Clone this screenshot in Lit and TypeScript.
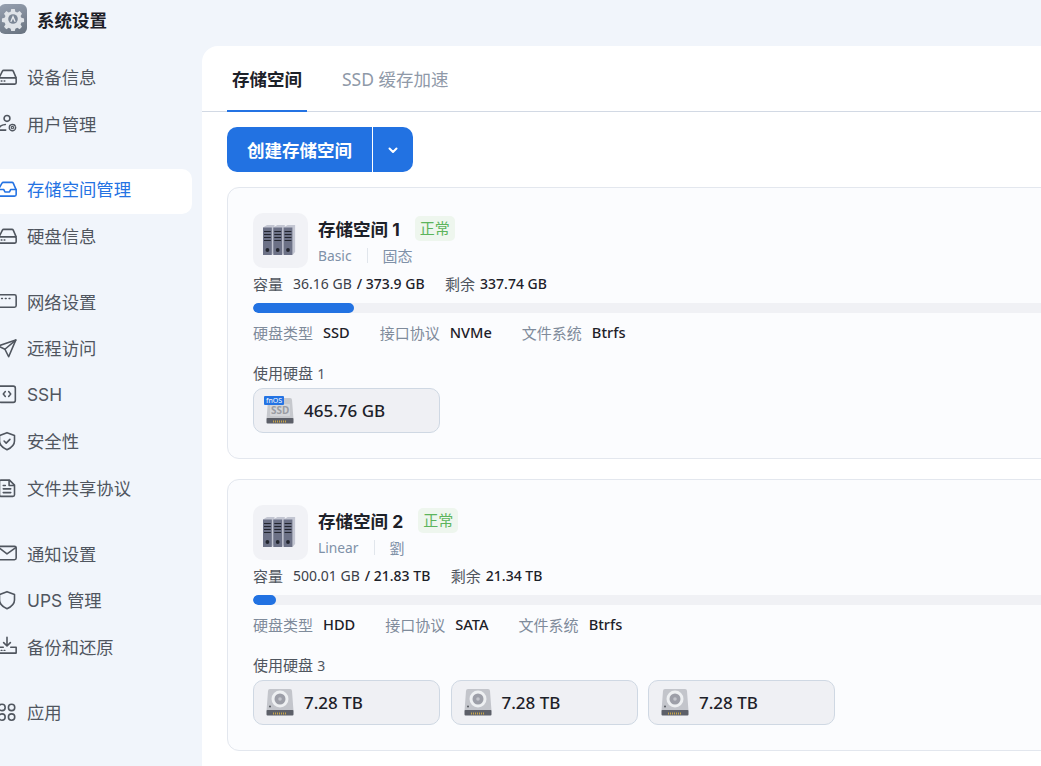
import { LitElement, html, css, svg } from "lit";
import { customElement } from "lit/decorators.js";

const driveIcon = svg`<path d="M2.5 13 6.5 5Q7 4 8 4H18Q19 4 19.5 5L23 13"/><rect x="1.5" y="13" width="21.5" height="7.5" rx="1.5"/><path d="M5 16.8h1M8.5 16.8h1" stroke-width="1.6"/>`;
const icons: Record<string, unknown> = {
  drive: driveIcon,
  user: svg`<circle cx="12" cy="6.5" r="3.5"/><path d="M2.5 20.5v-1.5Q3 14.5 10 13.8"/><path d="M2.5 20.5h8"/><circle cx="18.5" cy="17.5" r="1.4" stroke-width="1.4"/><circle cx="18.5" cy="17.5" r="3.8" stroke-dasharray="2 1.2" stroke-width="1.8"/>`,
  inbox: svg`<path d="M1.5 13 6 5Q6.5 4 7.5 4H18Q19 4 19.5 5L23 13V18.5Q23 20.5 21 20.5H3.5Q1.5 20.5 1.5 18.5Z"/><path d="M1.5 12.5H8L9.5 15.5H15L16.5 12.5H23"/>`,
  net: svg`<rect x="1.5" y="4.5" width="21.5" height="15" rx="2"/><path d="M5.5 9h1M10 9h1M14.5 9h1" stroke-width="1.8"/>`,
  send: svg`<path d="M22.5 2.5 1.5 9.5 9.5 13.5 14 22.5Z"/><path d="M22.5 2.5 9.5 13.5"/>`,
  ssh: svg`<rect x="2" y="2.5" width="20" height="19.5" rx="2.5"/><path d="M10 9 7.5 12 10 15M14 9 16.5 12 14 15" stroke-width="1.8"/>`,
  shield: svg`<path d="M12 2 21 5.5V12Q21 18.5 12 22.5 3 18.5 3 12V5.5Z"/><path d="M8.5 12 11 14.5 15.5 10"/>`,
  file: svg`<path d="M4.5 2.5H15L21 8.5V20Q21 22 19 22H5Q3 22 3 20V4Q3 2.5 4.5 2.5Z"/><path d="M14.5 3V9H20.5M7.5 13H16.5M7.5 17.5H16.5M7.5 9H10"/>`,
  mail: svg`<rect x="1.5" y="4" width="21.5" height="16" rx="2"/><path d="M2 5.5 12 13 22.5 5.5"/>`,
  ups: svg`<path d="M12 2 21 5.5V12Q21 18.5 12 22.5 3 18.5 3 12V5.5Z"/>`,
  backup: svg`<path d="M12 1.5V11.5M8 8 12 12 16 8M7.5 13.5H2V20.5H23V13.5H16.5"/><path d="M5 17.3h1M8.5 17.3h1" stroke-width="1.6"/>`,
  apps: svg`<circle cx="6" cy="6.5" r="3.8"/><circle cx="17.5" cy="6.5" r="3.8"/><circle cx="6" cy="18" r="3.8"/><circle cx="17.5" cy="18" r="3.8"/>`,
};

const groups = [
  [["drive", "设备信息"], ["user", "用户管理"]],
  [["inbox", "存储空间管理", true], ["drive", "硬盘信息"]],
  [["net", "网络设置"], ["send", "远程访问"], ["ssh", "SSH"], ["shield", "安全性"], ["file", "文件共享协议"]],
  [["mail", "通知设置"], ["ups", "UPS 管理"], ["backup", "备份和还原"]],
  [["apps", "应用"]],
] as [string, string, boolean?][][];

const serverIcon = html`<svg width="36" height="34" viewBox="0 0 36 34">
  ${[0, 10.3, 20.6].map(
    (x) => svg`
    <path d="M${x} 3.5 L${4 + x} 1 H${11.5 + x} V28 L${9 + x} 31 Z" fill="#c3c6d2"/>
    <rect x="${x}" y="3.5" width="8.8" height="27.5" fill="#6c7186"/>
    <path d="M${1 + x} 7.5h6.8M${1 + x} 10.5h6.8M${1 + x} 13.5h6.8M${1 + x} 16.5h6.8" stroke="#23262f" stroke-width="1.2"/>
    <circle cx="${4.4 + x}" cy="26" r="1.9" fill="#23262f"/>`
  )}
</svg>`;

const band = svg`<rect x="0.5" y="22" width="27" height="5.5" rx="1" fill="#5c5f68"/>
  <path d="M7 25.5h14" stroke="#c8a64a" stroke-width="2" stroke-dasharray="1 1"/>`;

const ssdIcon = html`<span class="disk-ico"><svg width="28" height="30" viewBox="0 0 28 30">
  <path d="M2 4 Q2 2 4 2 H24 Q26 2 26 4 L27.5 23 H0.5 Z" fill="#c6c8cd"/>
  <rect x="4" y="8" width="20" height="12" rx="1" fill="#d4d6da"/>
  ${band}
</svg><span class="ssd-txt">SSD</span><span class="fnos">fnOS</span></span>`;

const hddIcon = html`<svg class="disk-svg" width="28" height="30" viewBox="0 0 28 30">
  <path d="M2 3 Q2 1 4 1 H24 Q26 1 26 3 L27.5 23 H0.5 Z" fill="#c3c5cb"/>
  <circle cx="14" cy="11" r="8.5" fill="#eef0f2"/>
  <circle cx="14" cy="11" r="5.5" fill="#9d9fa8"/>
  <circle cx="14" cy="11" r="1.8" fill="#c3c5cb"/>
  <circle cx="4" cy="18.5" r="1" fill="#55585f"/>
  ${band}
</svg>`;

interface Vol {
  name: string; kind: string; media: string; used: string; total: string; free: string;
  fill: number; type: string; bus: string; count: number; disks: string[]; ssd: boolean;
}
const vols: Vol[] = [
  { name: "存储空间 1", kind: "Basic", media: "固态", used: "36.16 GB", total: "/ 373.9 GB", free: "337.74 GB", fill: 101, type: "SSD", bus: "NVMe", count: 1, disks: ["465.76 GB"], ssd: true },
  { name: "存储空间 2", kind: "Linear", media: "劉", used: "500.01 GB", total: "/ 21.83 TB", free: "21.34 TB", fill: 23, type: "HDD", bus: "SATA", count: 3, disks: ["7.28 TB", "7.28 TB", "7.28 TB"], ssd: false },
];

@customElement("app-root")
export class AppRoot extends LitElement {
  static styles = css`
    :host {
      display: flex; width: 1041px; height: 766px; overflow: hidden;
      background: #f1f5fb; color: #1d2129;
      font-family: Inter, "Noto Sans CJK SC", sans-serif;
    }
    .side { flex: none; width: 202px; box-sizing: border-box; }
    .brand { display: flex; align-items: center; gap: 10px; height: 38px; margin-left: -1px; font-size: 17.5px; font-weight: 700; }
    .logo { width: 28px; height: 30px; border-radius: 6px; background: linear-gradient(160deg, #97a1b1, #68727f); display: flex; align-items: center; justify-content: center; }
    .groups { margin-top: 18.85px; display: flex; flex-direction: column; gap: 20.55px; }
    .group { display: flex; flex-direction: column; gap: 1.6px; }
    .item { display: flex; align-items: center; gap: 10px; height: 45px; width: 202px; box-sizing: border-box; margin-left: -10px; padding: 0 0 5px 7px; border-radius: 10px; font-size: 17.33px; color: #50565f; }
    .item svg { width: 20px; height: 20px; fill: none; stroke: currentColor; stroke-width: 1.9; stroke-linecap: round; stroke-linejoin: round; flex: none; }
    .item.on { background: #fff; color: #2473e3; }
    .main { flex: none; width: 1000px; margin-top: 46px; background: #fff; border-top-left-radius: 16px; padding: 0 25px; box-sizing: border-box; }
    .tabs { display: flex; gap: 30px; height: 65px; margin: 0 -25px; padding: 0 25px; border-bottom: 1px solid #d2d9e4; }
    .tab { padding: 0 5px; line-height: 67px; font-size: 17.5px; color: #8f99a8; height: 65px; box-sizing: border-box; font-family: "Noto Sans", "Noto Sans CJK SC", sans-serif; }
    .tab.on { color: #1d2129; font-weight: 700; height: 66px; border-bottom: 2px solid #2473e3; }
    .btns { display: flex; width: 186px; height: 45px; margin-top: 15px; border-radius: 10px; overflow: hidden; background: #2272e2; color: #fff; font-size: 17.5px; font-weight: 700; }
    .btn-main { width: 145px; display: flex; align-items: center; justify-content: center; border-right: 1px solid #fff; }
    .btn-drop { flex: 1; display: flex; align-items: center; justify-content: center; }
    .card { margin-top: 15px; padding: 25px; height: 272px; box-sizing: border-box; border: 1px solid #e3e7ee; border-radius: 12px; background: #fbfcfe; width: 950px; }
    .card + .card { margin-top: 20px; }
    .head { display: flex; gap: 10px; height: 55px; }
    .srv { width: 55px; height: 55px; border-radius: 10px; background: #f1f2f6; display: flex; align-items: center; justify-content: center; }
    .tt { display: flex; align-items: center; gap: 15px; height: 25px; margin-top: 3px; font-size: 17.5px; font-weight: 700; }
    .badge { font-size: 15px; font-weight: 400; color: #5cb45c; background: #eef6ee; border-radius: 5px; padding: 0 5px; height: 25px; line-height: 25px; }
    .sub { display: flex; align-items: center; gap: 15px; margin-top: 3px; height: 22px; font-size: 15px; color: #7f91a8; }
    .sub em { font-style: normal; font-size: 13.8px; font-family: "Noto Sans", sans-serif; }
    .sub i { width: 1px; height: 15px; background: #e1e6ec; }
    .metrics { display: flex; align-items: center; height: 22px; margin-top: 4px; font-size: 15px; color: #50565f; }
    .metrics span, .metrics b { font-family: "Noto Sans", sans-serif; font-size: 14px; color: #3c4149; }
    .metrics b { font-weight: 500; color: #1d2129; }
    .metrics .u { margin-left: 10px; }
    .metrics .t { margin-left: 5px; }
    .metrics .r { margin-left: 20.5px; font-family: inherit; font-size: 15px; color: #50565f; }
    .metrics .f { margin-left: 5px; }
    .bar { height: 10px; margin-top: 9px; border-radius: 5px; background: #f0f1f5; overflow: hidden; }
    .bar div { height: 100%; border-radius: 5px; background: #2272e2; }
    .details { display: flex; align-items: center; gap: 30px; height: 22px; margin-top: 8px; font-size: 15px; color: #7f8b9b; }
    .details span { display: flex; align-items: center; gap: 10px; }
    .details b { font-family: "Noto Sans", sans-serif; font-size: 14.6px; font-weight: 500; color: #1d2129; }
    .lbl { height: 22px; line-height: 22px; margin-top: 20px; font-size: 15px; color: #50565f; }
    .lbl em { font-style: normal; font-size: 14px; font-family: "Noto Sans", sans-serif; }
    .disks { display: flex; gap: 10.5px; margin-top: 3px; }
    .disk { display: flex; align-items: center; gap: 10px; width: 187px; height: 45px; box-sizing: border-box; padding: 0 0 0 12px; border: 1px solid #cfd8e3; border-radius: 10px; background: #eff0f4; font-family: "Noto Sans", sans-serif; font-size: 17px; font-weight: 500; color: #1d2129; }
    .disk-ico { position: relative; width: 28px; height: 30px; flex: none; }
    .disk-svg { flex: none; }
    .fnos { position: absolute; left: -2px; top: 0; background: #2473e3; color: #fff; font-size: 7px; line-height: 9px; height: 9px; padding: 0 2px; border-radius: 1px; font-weight: 400; }
    .ssd-txt { position: absolute; left: 5px; top: 9px; font-size: 10px; font-weight: 700; line-height: 11px; color: #9a9ca3; }
  `;

  render() {
    return html`
      <aside class="side">
        <div class="brand">
          <span class="logo"><svg width="24" height="24" viewBox="0 0 24 24">
            <path fill="#dfe3e8" d="M10 1.5h4l.6 3 2.2 1 2.6-1.6 2.6 2.8-1.6 2.5.9 2.2 3 .6v3.9l-3 .6-.9 2.2 1.6 2.5-2.6 2.8-2.6-1.6-2.2 1-.6 2.6h-4l-.6-2.6-2.2-1-2.6 1.6-2.6-2.8 1.6-2.5-.9-2.2-3-.6v-3.9l3-.6.9-2.2L2 6.7l2.6-2.8 2.6 1.6 2.2-1z" transform="translate(1.2 0.6) scale(.9)"/>
            <circle cx="12" cy="12" r="4.8" fill="#7b8695"/>
            <path d="M12 8 9.2 14.8h1.5L12 11.4l1.3 3.4h1.5Z" fill="#e8ebef"/>
          </svg></span>
          系统设置
        </div>
        <div class="groups">
          ${groups.map((g) => html`<div class="group">
            ${g.map(([ic, label, on]) => html`<div class="item ${on ? "on" : ""}"><svg viewBox="0 0 24 24">${icons[ic]}</svg>${label}</div>`)}
          </div>`)}
        </div>
      </aside>
      <main class="main">
        <div class="tabs">
          <div class="tab on">存储空间</div>
          <div class="tab">SSD 缓存加速</div>
        </div>
        <div class="btns">
          <div class="btn-main">创建存储空间</div>
          <div class="btn-drop"><svg width="12" height="12" viewBox="0 0 12 12" fill="none" stroke="#fff" stroke-width="2" stroke-linecap="round" stroke-linejoin="round"><path d="M2.5 4.5 6 8l3.5-3.5"/></svg></div>
        </div>
        ${vols.map((v) => html`<section class="card">
          <div class="head">
            <div class="srv">${serverIcon}</div>
            <div>
              <div class="tt">${v.name}<span class="badge">正常</span></div>
              <div class="sub"><em>${v.kind}</em><i></i>${v.media}</div>
            </div>
          </div>
          <div class="metrics">容量<span class="u">${v.used}</span><b class="t">${v.total}</b><span class="r">剩余</span><b class="f">${v.free}</b></div>
          <div class="bar"><div style="width:${v.fill}px"></div></div>
          <div class="details">
            <span>硬盘类型<b>${v.type}</b></span>
            <span>接口协议<b>${v.bus}</b></span>
            <span>文件系统<b>Btrfs</b></span>
          </div>
          <div class="lbl">使用硬盘 <em>${v.count}</em></div>
          <div class="disks">
            ${v.disks.map((d) => html`<div class="disk">${v.ssd ? ssdIcon : hddIcon}${d}</div>`)}
          </div>
        </section>`)}
      </main>
    `;
  }
}
